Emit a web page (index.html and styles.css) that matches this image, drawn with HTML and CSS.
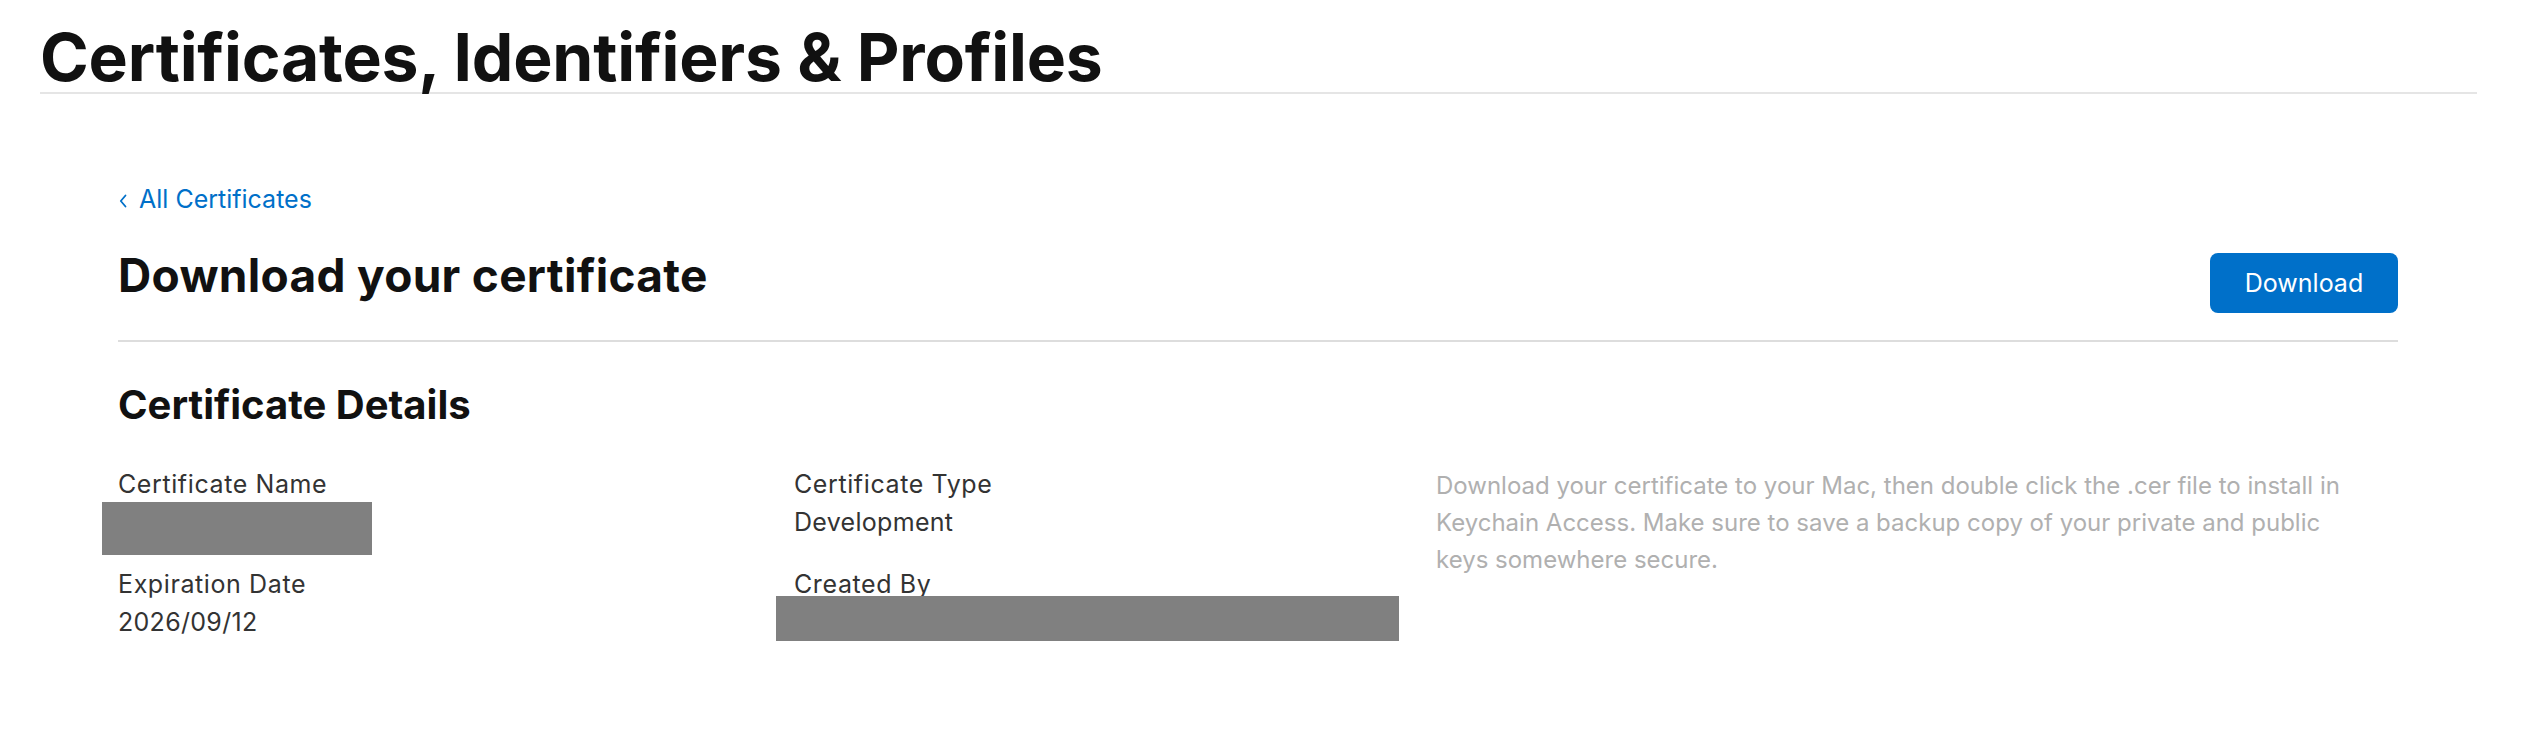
FILE: index.html
```html
<!DOCTYPE html>
<html lang="en">
<head>
<meta charset="utf-8">
<title>Certificates, Identifiers &amp; Profiles</title>
<link rel="stylesheet" href="styles.css">
</head>
<body>
<div class="page">
  <header class="header">
    <h1 class="title">Certificates, Identifiers &amp; Profiles</h1>
  </header>
  <main class="main">
    <a class="back" href="#"><svg class="chev" viewBox="0 0 8 14" width="8" height="14"><path d="M6.5 1.5 L1.8 7 L6.5 12.5" fill="none" stroke="#0070c9" stroke-width="1.8" stroke-linecap="round" stroke-linejoin="round"/></svg><span>All Certificates</span></a>
    <div class="headrow">
      <h2 class="h2">Download your certificate</h2>
      <button class="btn" type="button">Download</button>
    </div>
    <h3 class="h3">Certificate Details</h3>
    <div class="details">
      <div class="col">
        <div class="field">
          <div class="label">Certificate Name</div>
          <div class="value"><span class="redact redact-name"></span></div>
        </div>
        <div class="field">
          <div class="label">Expiration Date</div>
          <div class="value">2026/09/12</div>
        </div>
      </div>
      <div class="col">
        <div class="field">
          <div class="label">Certificate Type</div>
          <div class="value">Development</div>
        </div>
        <div class="field">
          <div class="label">Created By</div>
          <div class="value"><span class="redact redact-creator"></span></div>
        </div>
      </div>
      <div class="col note">
        <p class="note-text">Download your certificate to your Mac, then double click the .cer file to install in Keychain Access. Make sure to save a backup copy of your private and public keys somewhere secure.</p>
      </div>
    </div>
  </main>
</div>
</body>
</html>
```

FILE: styles.css
```css
html, body {
  margin: 0;
  padding: 0;
  background: #ffffff;
}
body {
  font-family: Inter, "Noto Sans", "Liberation Sans", sans-serif;
  color: #333333;
}
.page {
  padding: 0 67px 0 40px;
}
.header {
  padding-top: 22px;
  border-bottom: 2px solid #e5e5e5;
}
.title {
  margin: 0;
  font-size: 66px;
  line-height: 70px;
  font-weight: 700;
  color: #111111;
  letter-spacing: -0.2px;
}
.main {
  padding: 0 79px 0 78px;
}
.back {
  display: inline-flex;
  align-items: center;
  margin-top: 87px;
  height: 36px;
  font-size: 25px;
  line-height: 36px;
  color: #0070c9;
  text-decoration: none;
}
.chev {
  margin: 3px 12px 0 1px;
}
.headrow {
  display: flex;
  justify-content: space-between;
  align-items: flex-start;
  margin-top: 30px;
  padding-bottom: 27px;
  border-bottom: 2px solid #dddddd;
}
.h2 {
  margin: 0;
  font-size: 46px;
  line-height: 56px;
  font-weight: 700;
  color: #111111;
  letter-spacing: 0.3px;
}
.btn {
  margin-top: 6px;
  width: 188px;
  height: 60px;
  border: 0;
  border-radius: 8px;
  background: #0070c9;
  color: #ffffff;
  font-family: inherit;
  font-size: 25px;
  cursor: pointer;
  padding: 0;
}
.h3 {
  margin: 40px 0 0;
  font-size: 40px;
  line-height: 46px;
  font-weight: 700;
  color: #111111;
}
.details {
  display: grid;
  grid-template-columns: 676px 642px 1fr;
  margin-top: 37px;
  font-size: 24px;
  line-height: 38px;
}
.col {
  display: flex;
  flex-direction: column;
  gap: 24px;
}
.label {
  font-size: 25px;
  letter-spacing: 0.6px;
}
.value {
  position: relative;
  height: 38px;
  font-size: 25px;
  letter-spacing: 0.3px;
}
.redact {
  position: absolute;
  background: #808080;
}
.redact-name {
  top: -1px;
  left: -16px;
  width: 270px;
  height: 53px;
}
.redact-creator {
  top: -7px;
  left: -18px;
  width: 623px;
  height: 59px;
}
.note-text {
  margin: 2px 0 0;
  max-width: 910px;
  line-height: 37px;
  color: #b0b0b0;
}
```
